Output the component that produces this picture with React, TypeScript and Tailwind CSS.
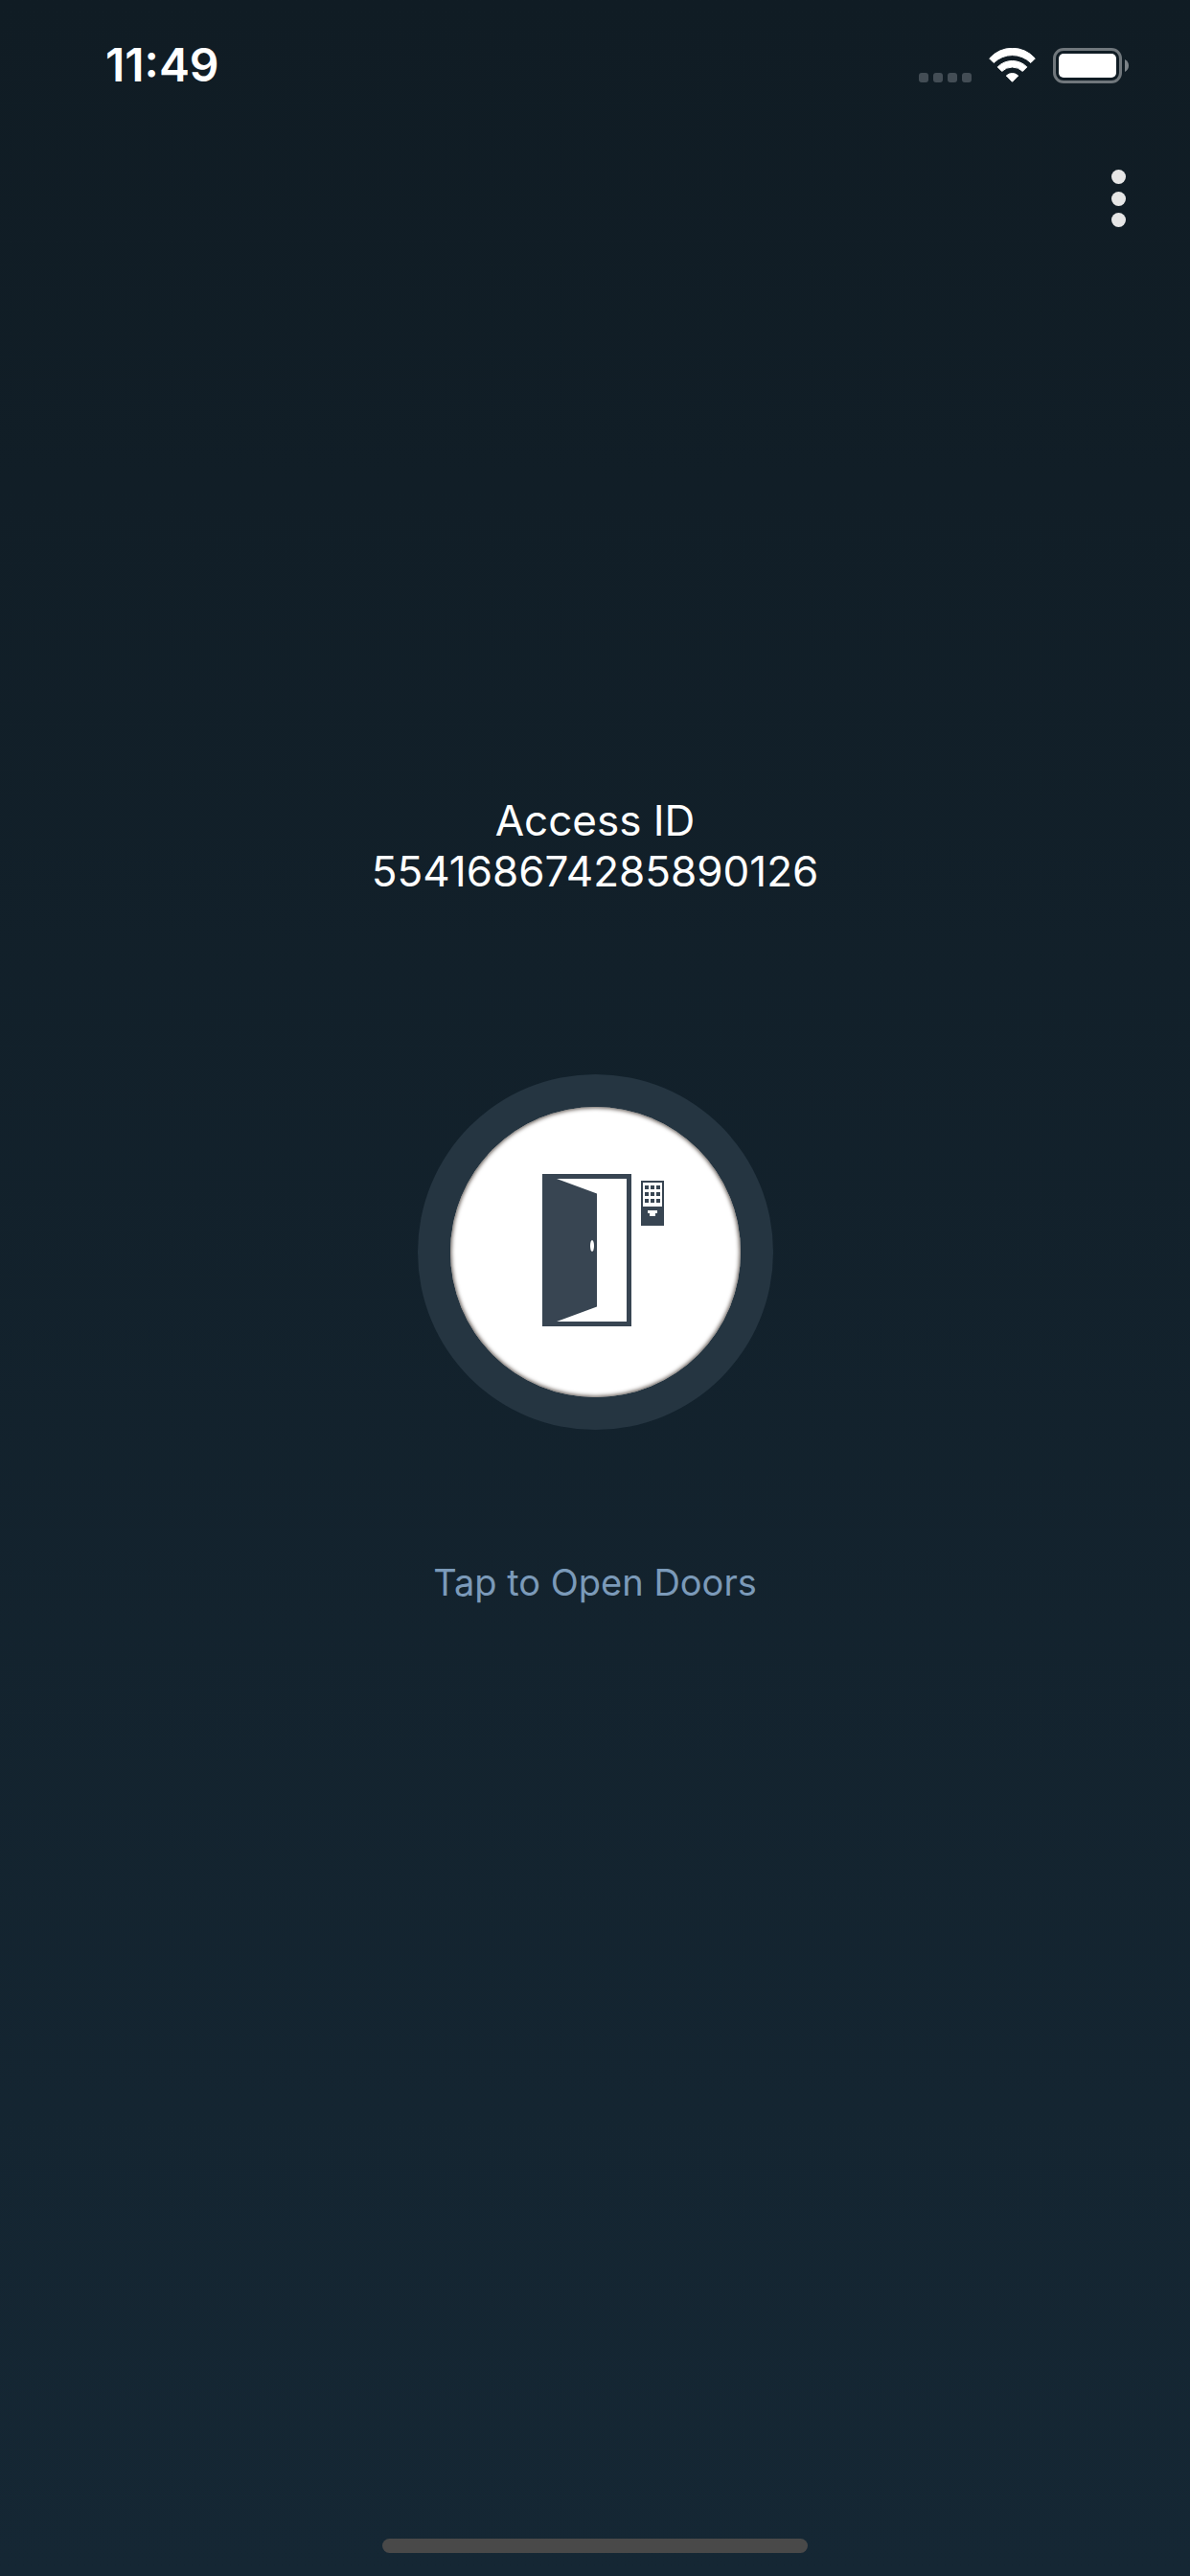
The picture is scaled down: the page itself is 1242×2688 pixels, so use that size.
import { useState } from "react"

const ACCESS_ID = '554168674285890126'

const SignalIcon = () => (
    <svg width="55" height="36" viewBox="0 0 55 36" fill="#434d55" aria-hidden="true">
        {[0, 15, 30, 45].map(x => (
            <rect key={x} x={x} y="26" width="10" height="10" rx="3" />
        ))}
    </svg>
)

const WifiIcon = () => (
    <svg width="49" height="36" viewBox="0 0 49 36" fill="white" stroke="white" strokeWidth="1" strokeLinejoin="round" aria-hidden="true">
        <path d="M.7 11A31.7 31.7 0 0 1 48.3 11L43.8 15.5A27.5 27.5 0 0 0 5.2 15.5Z" />
        <path d="M9.2 19.9A21.5 21.5 0 0 1 39.8 19.9L35.3 24.4A15.5 15.5 0 0 0 13.7 24.4Z" />
        <path d="M18.3 29A9 9 0 0 1 30.7 29L24.5 35.3Z" />
    </svg>
)

const BatteryIcon = () => (
    <svg width="79" height="37" viewBox="0 0 79 37" aria-hidden="true">
        <rect x="1.5" y="1.5" width="69" height="34" rx="9.5" fill="none" stroke="#70777c" strokeWidth="3" />
        <rect x="6" y="6" width="60" height="25" rx="5" fill="white" />
        <path d="M75 12V25C77.7 23.8 79 21.3 79 18.5S77.7 13.2 75 12Z" fill="#7c8388" />
    </svg>
)

const DoorIcon = () => (
    <svg className="size-full" viewBox="0 0 303 303" aria-hidden="true">
        {/* Frame and open leaf */}
        <path d="M96 70H189V229H96Z" fill="#384552" />
        <path d="M111 75H184V224H111L153 208.5V90.5Z" fill="white" />
        <ellipse cx="148" cy="145" rx="2" ry="6" fill="white" />

        {/* Keypad */}
        <path d="M199 77H223V124H199Z" fill="#384552" />
        <path d="M201 79H221V104H201Z" fill="white" />
        {[82, 89, 96].map(y => [203, 209, 215].map(x => (
            <rect key={`${x}-${y}`} x={x} y={y} width="4" height="4" fill="#384552" />
        )))}
        <path d="M206 108H216V111H214V114H208V111H206Z" fill="white" />
    </svg>
)

export default function App() {
    const [opening, setOpening] = useState(false)

    return (
        <div className="flex min-h-screen flex-col bg-linear-to-b from-[#101c24] to-[#152734] font-['Inter',sans-serif] text-white">
            <div className="flex h-24 items-center justify-between pt-10 pr-16 pl-[110px]">
                <span className="text-5xl leading-14 font-semibold">11:49</span>
                <div className="flex items-center gap-[18px]">
                    <SignalIcon />
                    <WifiIcon />
                    <BatteryIcon />
                </div>
            </div>

            <header className="flex justify-end pt-16 pr-[50px]">
                <button type="button" aria-label="Menu" className="cursor-pointer p-4">
                    <svg width="16" height="61" viewBox="0 0 16 61" fill="#e6e6e6" aria-hidden="true">
                        <circle cx="7.5" cy="8.5" r="7.5" />
                        <circle cx="7.5" cy="31.5" r="7.5" />
                        <circle cx="7.5" cy="53.5" r="7.5" />
                    </svg>
                </button>
            </header>

            <main className="flex flex-1 flex-col items-center pt-[577px] text-center">
                <h1 className="text-[44px] leading-[53px] font-normal">
                    Access ID
                    <span className="block">{ACCESS_ID}</span>
                </h1>

                <button
                    type="button"
                    id="open-doors"
                    aria-labelledby="open-doors-label"
                    aria-pressed={opening}
                    onClick={() => setOpening(!opening)}
                    className="mt-[185px] size-[371px] cursor-pointer rounded-full bg-[#253541] p-[34px]"
                >
                    <span className="block size-full rounded-full bg-white shadow-[inset_0_0_4px_1px_#5c534d]">
                        <DoorIcon />
                    </span>
                </button>

                <label id="open-doors-label" htmlFor="open-doors" className="mt-[135px] text-[38px] leading-12 text-[#7b9ab9]">
                    Tap to Open Doors
                </label>
            </main>

            <footer className="flex justify-center pb-6">
                <div className="h-[15px] w-[444px] rounded-full bg-[#494949]" />
            </footer>
        </div>
    )
}
